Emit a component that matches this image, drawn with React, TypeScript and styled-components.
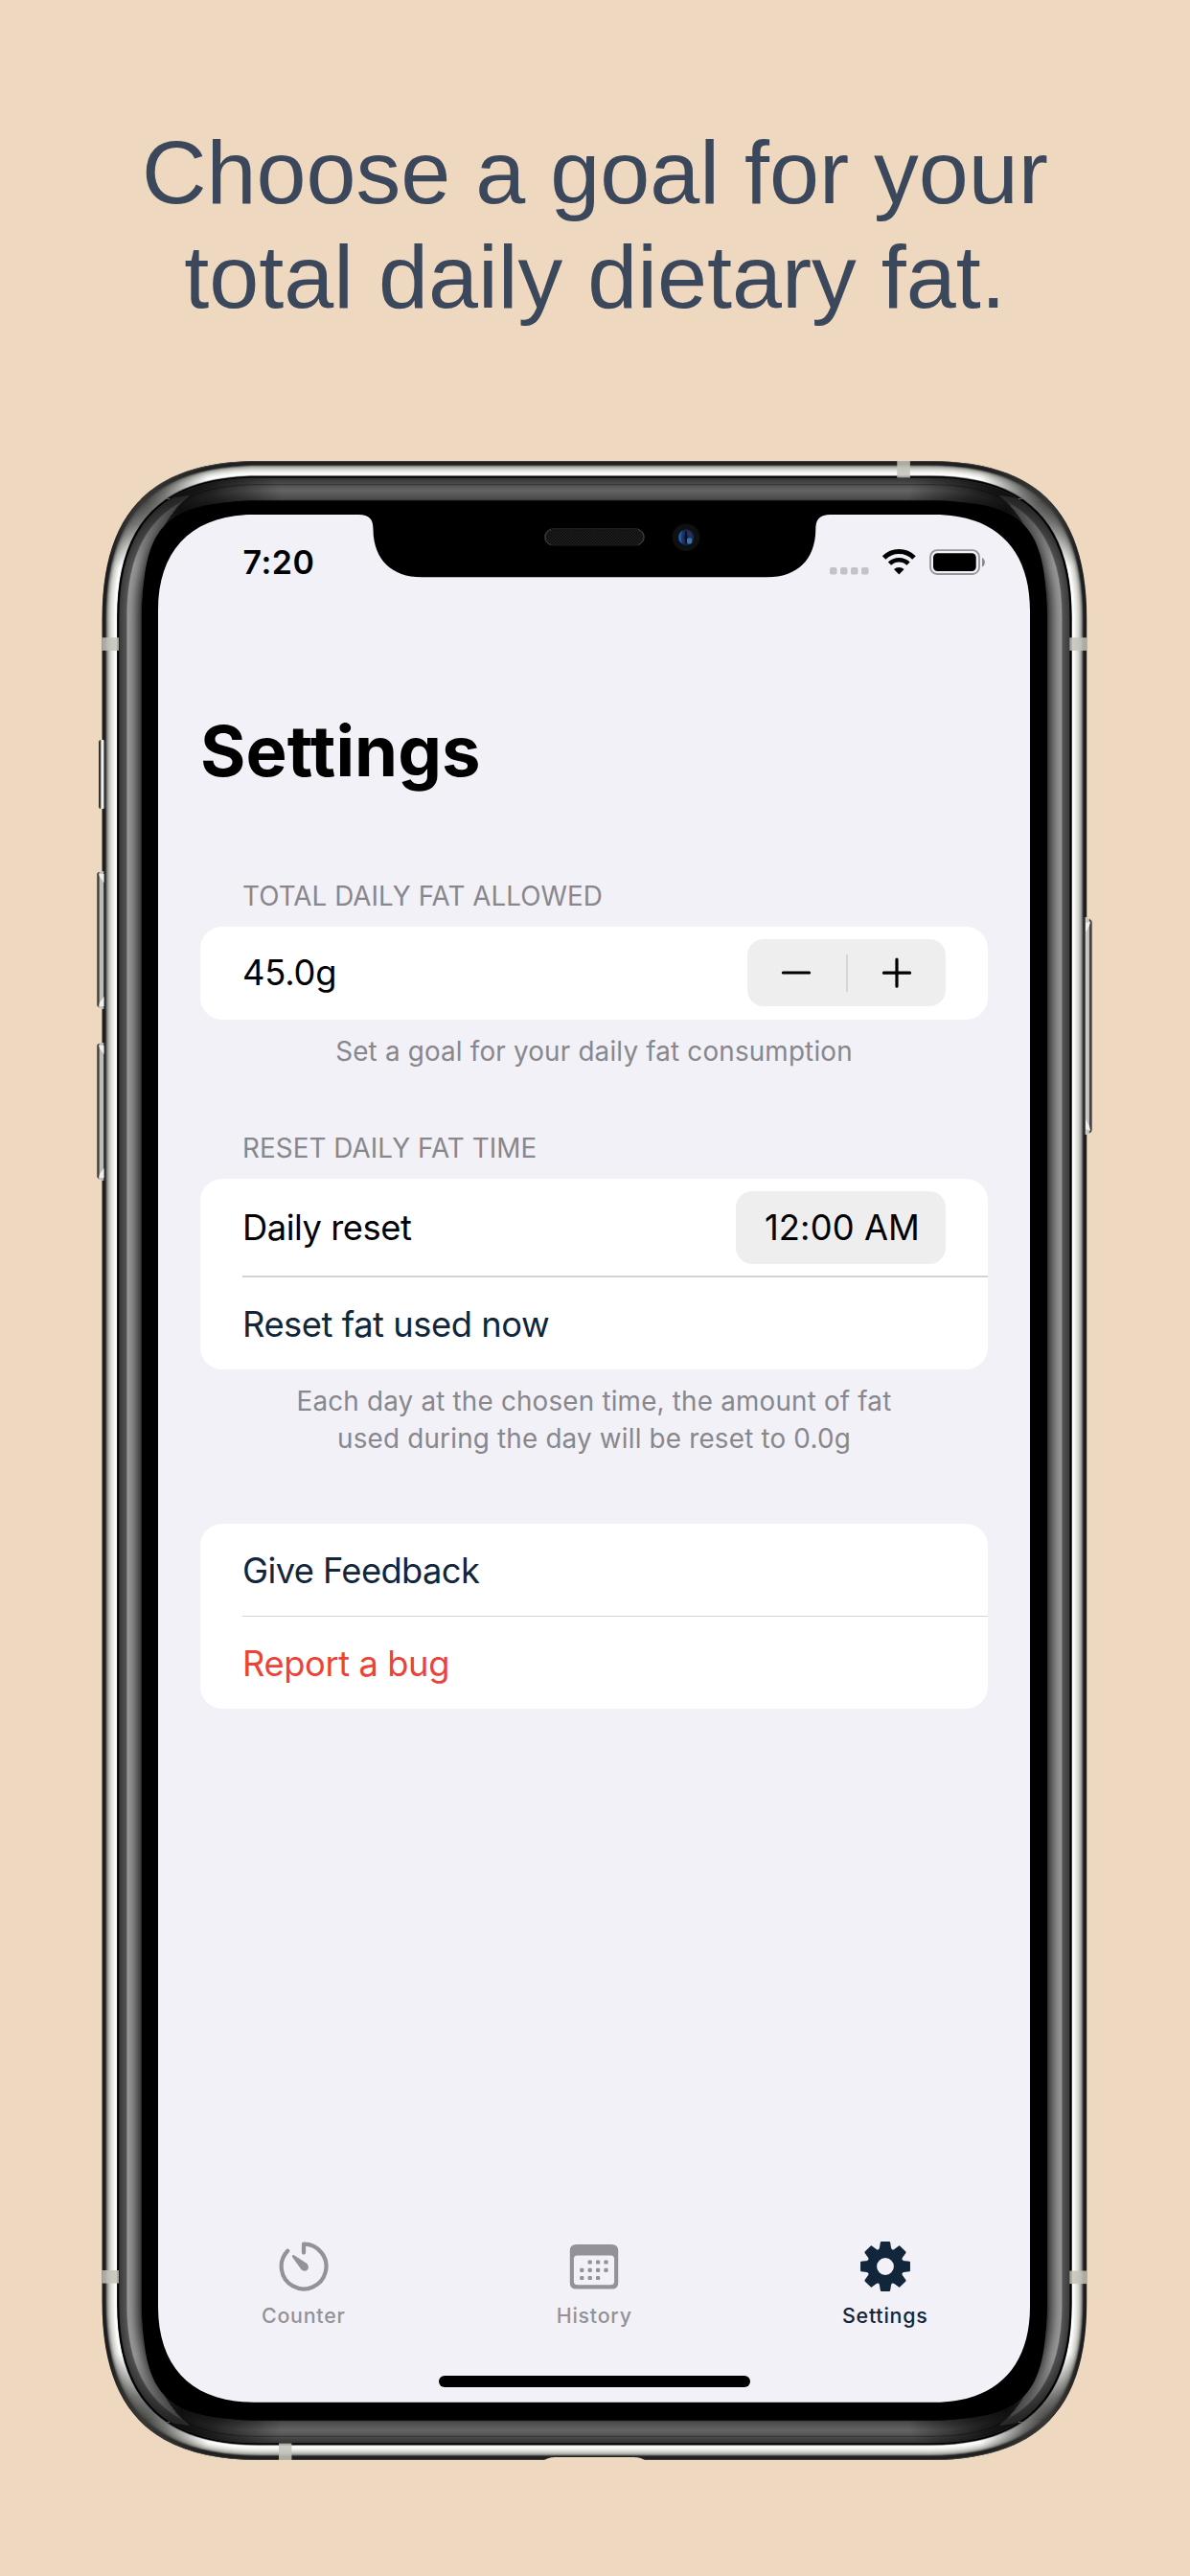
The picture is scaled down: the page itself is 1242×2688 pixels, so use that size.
import React from "react";
import styled, { createGlobalStyle } from "styled-components";

const INTER = `Inter, "Noto Sans", sans-serif`;
const NAVY = "#11263b";
const GRAY = "#88878c";
const TAB_GRAY = "#939298";

const GlobalStyle = createGlobalStyle`
  * { box-sizing: border-box; }
  body { margin: 0; background: #efd8c0; }
`;

const Page = styled.main`
  width: 1242px;
  height: 2688px;
  overflow: hidden;
  display: flex;
  flex-direction: column;
  align-items: center;
  background: #efd8c0;
  font-family: ${INTER};
`;

const Headline = styled.h1`
  margin: 0;
  padding: 125px 0 0;
  height: 478px;
  font: 400 93.5px/109px "Liberation Sans", Arial, sans-serif;
  color: #3b475b;
  text-align: center;
  white-space: pre-line;
`;

const Phone = styled.section`
  display: grid;
  width: 1042px;
  height: 2092px;
  > * { grid-area: 1 / 1; }
`;

const Screen = styled.div`
  width: 910px;
  height: 1970px;
  margin: 59px 0 0 65px;
  display: flex;
  flex-direction: column;
  z-index: 1;
`;

const StatusBar = styled.header`
  height: 100px;
  padding: 0 46px 0 88.5px;
  display: flex;
  align-items: center;
  justify-content: space-between;
`;

const Clock = styled.time`
  font-size: 34px;
  line-height: 44px;
  font-weight: 600;
  letter-spacing: 0.5px;
`;

const Title = styled.h2`
  margin: 102px 0 0 44px;
  font-size: 72.4px;
  line-height: 90px;
  font-weight: 700;
  letter-spacing: 0.1px;
  color: #000;
`;

const Group = styled.section<{ $gap: number }>`
  margin: ${(p) => p.$gap}px 44px 0;
  display: flex;
  flex-direction: column;
`;

const GroupTitle = styled.h3<{ $track: number }>`
  margin: 0 0 13px;
  padding-left: 44px;
  font-size: 27.8px;
  line-height: 38px;
  font-weight: 400;
  letter-spacing: ${(p) => p.$track}px;
  color: ${GRAY};
`;

const Card = styled.div`
  display: flex;
  flex-direction: column;
  background: #fff;
  border-radius: 23px;
`;

const Row = styled.div<{ $h: number; $color?: string; $track?: number; $drop?: number }>`
  height: ${(p) => p.$h}px;
  padding: ${(p) => p.$drop ?? 0}px 44px 0;
  display: flex;
  align-items: center;
  justify-content: space-between;
  font-size: 36.3px;
  letter-spacing: ${(p) => p.$track ?? 0}px;
  color: ${(p) => p.$color ?? "#000"};
`;

const Separator = styled.div`
  height: 1.6px;
  margin-left: 44px;
  background: #d3d3d6;
`;

const Note = styled.p<{ $track: number }>`
  margin: 14px 0 0;
  font-size: 27.8px;
  line-height: 39.5px;
  letter-spacing: ${(p) => p.$track}px;
  color: ${GRAY};
  text-align: center;
  white-space: pre-line;
`;

const Stepper = styled.div`
  width: 207px;
  height: 70px;
  display: flex;
  align-items: center;
  border-radius: 17px;
  background: #eeeeef;
`;

const StepButton = styled.button`
  flex: 1;
  height: 100%;
  padding: 0;
  border: 0;
  background: none;
  display: flex;
  align-items: center;
  justify-content: center;
`;

const StepDivider = styled.span`
  width: 2px;
  height: 39px;
  background: #d6d6d8;
`;

const TimePill = styled.span`
  width: 219px;
  height: 76px;
  padding: 1px 0 0 3px;
  display: flex;
  align-items: center;
  justify-content: center;
  border-radius: 17px;
  background: #eeeeef;
  letter-spacing: 0.1px;
`;

const TabBar = styled.nav`
  margin-top: auto;
  height: 144px;
  display: grid;
  grid-template-columns: repeat(3, 303.5px);
`;

const Tab = styled.div<{ $active?: boolean }>`
  display: flex;
  flex-direction: column;
  align-items: center;
  font-size: 21.4px;
  line-height: 28px;
  font-weight: 500;
  letter-spacing: 0.75px;
  color: ${(p) => (p.$active ? NAVY : TAB_GRAY)};
  svg { display: block; margin-bottom: 7px; }
`;

const HomeIndicator = styled.div`
  width: 325px;
  height: 12px;
  margin: 0 auto 16px;
  border-radius: 6px;
  background: #000;
`;

/* ---- device artwork ---- */

const L = 106.5;
const R = 1134.3;
const T = 481;
const B = 2567;
const CX = (L + R) / 2;

// Rounded rectangle with continuous corners, inset by d from the outer edge.
function shell(d: number, extent?: number, handle?: number): string {
  const k = d / 58;
  const e = extent ?? 165 - 65 * k;
  const a = handle ?? 52 - 16 * k;
  const l = L + d;
  const r = R - d;
  const t = T + d;
  const b = B - d;
  return (
    `M${l} ${t + e}C${l} ${t + a} ${l + a} ${t} ${l + e} ${t}` +
    `H${r - e}C${r - a} ${t} ${r} ${t + a} ${r} ${t + e}` +
    `V${b - e}C${r} ${b - a} ${r - a} ${b} ${r - e} ${b}` +
    `H${l + e}C${l + a} ${b} ${l} ${b - a} ${l} ${b - e}Z`
  );
}

type Stop = [number, number];
const SIDE: Stop[] = [
  [0, 60], [1, 30], [3.6, 34], [4.6, 100], [5.5, 140], [7, 184], [9, 214], [11.5, 236], [14, 254],
  [15.4, 254], [15.8, 30], [16.2, 0], [17.6, 0], [18.2, 60], [24, 80], [25.4, 84], [25.8, 112], [26.6, 152],
  [31, 136], [36, 100], [40, 66], [41.3, 40], [41.8, 0], [43, 0],
];
const CAP: Stop[] = [
  [0, 95], [1, 34], [4, 34], [4.8, 90], [6, 160], [8, 200], [10.5, 232], [13, 250],
  [14.8, 254], [15.5, 150], [16, 10], [17.4, 0], [18, 54], [23.8, 74], [24.4, 54], [25, 54], [25.6, 84],
  [31, 100], [36, 86], [40, 74], [41, 60], [41.6, 0], [43, 0],
];
function tone(stops: Stop[], d: number): string {
  let i = 1;
  while (i < stops.length - 1 && stops[i][0] < d) i++;
  const [x0, v0] = stops[i - 1];
  const [x1, v1] = stops[i];
  const v = Math.round(v0 + ((v1 - v0) * Math.min(1, Math.max(0, (d - x0) / (x1 - x0)))));
  return `rgb(${v},${v},${v > 100 && v < 245 && d < 15 ? v - 4 : v})`;
}
const RINGS = Array.from({ length: 106 }, (_, i) => i * 0.4);

function Rings({ stops, clip }: { stops: Stop[]; clip?: string }) {
  return (
    <g clipPath={clip}>
      {RINGS.map((d) => (
        <path key={d} d={shell(d)} fill={tone(stops, d + 0.2)} />
      ))}
    </g>
  );
}

const SCREEN =
  `M165 637C165 573 201 537 265 537H374C386 537 389.5 542 389.5 553C390 584 409 602.3 440 602.3` +
  `H800.8C832 602.3 850.8 584 851.3 553C851.3 542 855 537 867 537H975C1039 537 1075 573 1075 637` +
  `V2406.7C1075 2470.7 1039 2506.7 975 2506.7H265C201 2506.7 165 2470.7 165 2406.7Z`;

function CornerShade() {
  return (
    <>
      <g clipPath="url(#rim)">
        <circle cx="147" cy="522" r="74" fill="url(#rimShade)" />
      </g>
      <g clipPath="url(#lip)">
        <g clipPath="url(#caps)">
          <ellipse cx="190" cy="532" rx="106" ry="76" fill="url(#lipShade)" />
        </g>
        <g clipPath="url(#sides)">
          <circle cx="188" cy="526" r="80" fill="url(#sideShade)" />
        </g>
      </g>
    </>
  );
}

function DeviceArt() {
  const capTop = `M${L} ${T}L150 524Q178 520 198 517Q182 530 172 548L300 620H941L1068.8 548Q1058.8 530 1042.8 517Q1062.8 520 1090.8 524L${R} ${T}Z`;
  const capBottom = `M${L} ${B}L150 2524Q178 2528 198 2531Q182 2518 172 2500L300 2428H941L1068.8 2500Q1058.8 2518 1042.8 2531Q1062.8 2528 1090.8 2524L${R} ${B}Z`;
  const sides = `M${L} ${T}L150 524Q178 520 198 517Q182 530 172 548V1524H${L - 10}V${T}Z`;
  return (
    <svg width="1042" height="2092" viewBox="100 478 1042 2092" aria-hidden="true">
      <defs>
        <clipPath id="caps"><path d={capTop + capBottom} /></clipPath>
        <clipPath id="sides"><path d={sides} /></clipPath>
        <clipPath id="rim"><path d={shell(0.8) + shell(16)} clipRule="evenodd" /></clipPath>
        <clipPath id="lip"><path d={shell(18) + shell(42)} clipRule="evenodd" /></clipPath>
        <radialGradient id="rimShade">
          <stop offset="0" stopColor="#3a3a38" stopOpacity=".88" />
          <stop offset=".35" stopColor="#3a3a38" stopOpacity=".66" />
          <stop offset="1" stopColor="#3a3a38" stopOpacity="0" />
        </radialGradient>
        <radialGradient id="lipShade">
          <stop offset="0" stopColor="#000" stopOpacity=".85" />
          <stop offset=".35" stopColor="#000" stopOpacity=".65" />
          <stop offset="1" stopColor="#000" stopOpacity="0" />
        </radialGradient>
        <radialGradient id="sideShade">
          <stop offset="0" stopColor="#111" stopOpacity=".65" />
          <stop offset="1" stopColor="#111" stopOpacity="0" />
        </radialGradient>
        <linearGradient id="mute" x1="0" x2="1">
          <stop offset="0" stopColor="#222" /><stop offset=".22" stopColor="#444" />
          <stop offset=".45" stopColor="#f4f4f2" /><stop offset=".65" stopColor="#eee" />
          <stop offset=".85" stopColor="#444" /><stop offset="1" stopColor="#222" />
        </linearGradient>
        <linearGradient id="volume" x1="0" x2="1">
          <stop offset="0" stopColor="#332f2c" /><stop offset=".2" stopColor="#444" />
          <stop offset=".36" stopColor="#babdb8" /><stop offset=".75" stopColor="#b8bbb6" />
          <stop offset=".82" stopColor="#444" /><stop offset="1" stopColor="#222" />
        </linearGradient>
        <linearGradient id="power" x1="0" x2="1">
          <stop offset="0" stopColor="#222" /><stop offset=".16" stopColor="#444" />
          <stop offset=".26" stopColor="#cdcdca" /><stop offset=".62" stopColor="#c2c2be" />
          <stop offset=".74" stopColor="#444" /><stop offset="1" stopColor="#4a403a" />
        </linearGradient>
        <radialGradient id="lens">
          <stop offset="0" stopColor="#0c1430" /><stop offset=".5" stopColor="#1c3768" />
          <stop offset="1" stopColor="#152a50" />
        </radialGradient>
        <pattern id="mesh" width="3" height="3" patternUnits="userSpaceOnUse">
          <rect width="3" height="3" fill="#0c0c0c" />
          <rect width="1.4" height="1.4" fill="#222" />
          <rect x="1.5" y="1.5" width="1.4" height="1.4" fill="#222" />
        </pattern>
      </defs>

      <Rings stops={SIDE} />
      <Rings stops={CAP} clip="url(#caps)" />
      <CornerShade />
      <g transform={`translate(${2 * CX} 0) scale(-1 1)`}><CornerShade /></g>
      <g transform={`translate(0 ${T + B}) scale(1 -1)`}><CornerShade /></g>
      <g transform={`translate(${2 * CX} ${T + B}) scale(-1 -1)`}><CornerShade /></g>
      <path d={shell(42, 122, 24)} fill="#000" />

      <rect x="103" y="772" width="7" height="72" rx="2.5" fill="url(#mute)" />
      {[909, 1088].map((y) => (
        <g key={y}>
          <path d={`M101.3 ${y + 3}Q101.3 ${y + 1.5} 103 ${y + 1}L107 ${y}H110V${y + 144}H107L103 ${y + 142}Q101.3 ${y + 141} 101.3 ${y + 140}Z`} fill="url(#volume)" />
          <path d={`M103 ${y + 2.5}L108.5 ${y + 3}V${y + 12}L104 ${y + 6}ZM103 ${y + 141.5}L108.5 ${y + 141}V${y + 131}L104 ${y + 137}Z`} fill="#efefed" />
        </g>
      ))}
      <path d="M1131 957H1134L1138 959.5Q1139.7 960.5 1139.7 962V1179Q1139.7 1181 1138 1182L1134 1184H1131Z" fill="url(#power)" />
      <path d="M1138 961.5L1133 963V973L1137 966ZM1138 1180L1133 1178V1168L1137 1175Z" fill="#f0f0ee" />

      <g fill="#c2c3b8" fillOpacity=".86">
        <rect x="106.5" y="665.3" width="17.5" height="13.6" />
        <rect x="1116.3" y="665.3" width="18" height="13.6" />
        <rect x="106.5" y="2369" width="17.5" height="13.6" />
        <rect x="1116.3" y="2369.5" width="18" height="13.6" />
        <rect x="936.3" y="481" width="13.6" height="17.5" />
        <rect x="291" y="2549.5" width="13.4" height="17.5" />
      </g>
      <path d="M567 2567.6C573 2564.5 575 2564 581 2564H660C666 2564 668 2564.5 674 2567.6Z" fill="#efd8c0" />

      <path d={SCREEN} fill="#f2f1f8" />

      <rect x="568.6" y="551.6" width="103.6" height="17.4" rx="8.7" fill="url(#mesh)" stroke="#1d1d1d" strokeWidth="1.2" />
      <path d="M575 552.6C571 554.5 569 557 569 560.5S571 566.5 575 568.5M666 552.6C670 554.5 672 557 672 560.5S670 566.5 666 568.5" fill="none" stroke="#484848" strokeWidth="1" />
      <circle cx="716" cy="560.7" r="14.3" fill="#0e1011" />
      <circle cx="716" cy="560.7" r="8.2" fill="url(#lens)" />
      <path d="M712 554A7.5 7.5 0 0 0 712 567Q710 560 712 554Z" fill="#2c5a98" />
      <ellipse cx="719.6" cy="564.4" rx="2.8" ry="3.2" fill="#3a72ae" />
      <ellipse cx="718.8" cy="556.2" rx="2.8" ry="2" fill="#33285f" />
      <rect x="714.8" y="554" width="2.2" height="13.5" rx="1" fill="#0a1024" />
    </svg>
  );
}

function StatusIcons() {
  return (
    <svg width="164" height="30" viewBox="865 572 164 30" aria-hidden="true">
      {[866, 877, 888, 899].map((x) => (
        <rect key={x} x={x} y="592" width="7.5" height="7.5" rx="1.8" fill="#c3c2c8" />
      ))}
      <g fill="none" stroke="#000">
        <path d="M922.6 582A22 22 0 0 1 954 582" strokeWidth="5" />
        <path d="M928.5 588.2A14 14 0 0 1 948.1 588.2" strokeWidth="4.6" />
      </g>
      <path d="M933 594A7.8 7.8 0 0 1 943.6 594L938.3 599.4Z" />
      <rect x="971" y="574.2" width="51" height="24.8" rx="7" fill="none" stroke="#97969c" strokeWidth="1.8" />
      <rect x="974" y="577.2" width="44.7" height="18.8" rx="4.4" />
      <path d="M1025 582C1028.8 583.4 1028.8 590.4 1025 591.4Z" fill="#88878d" />
    </svg>
  );
}

function TimerIcon() {
  return (
    <svg width="54" height="60" viewBox="-27 -30 54 60" aria-hidden="true">
      <path d="M0 -14.4V-23.4A23.4 23.4 0 1 1 -16.8 -16.2" fill="none" stroke={TAB_GRAY} strokeWidth="4.2" strokeLinecap="round" strokeLinejoin="round" />
      <path d="M-11.7 -11.5C-11 -12.2 -10.2 -11.9 -9.6 -11.5L3 -3.2C6.6 .2 4.6 4.8 1.2 4.8C-1 4.8 -2.4 3.6 -3.6 1.8L-11.7 -9.6C-12.2 -10.4 -12.3 -11 -11.7 -11.5Z" fill={TAB_GRAY} />
    </svg>
  );
}

function CalendarIcon() {
  const dots = [
    [615.2, 2362], [623.6, 2362], [632, 2362],
    [606.8, 2370.3], [615.2, 2370.3], [623.6, 2370.3], [632, 2370.3],
    [606.8, 2378.5], [615.2, 2378.5], [623.6, 2378.5],
  ];
  return (
    <svg width="54" height="60" viewBox="592.5 2336.5 54 60" aria-hidden="true" fill={TAB_GRAY}>
      <path
        fillRule="evenodd"
        d="M601 2343.4H638Q644.7 2343.4 644.7 2350V2383.4Q644.7 2390 638 2390H601Q594.3 2390 594.3 2383.4V2350Q594.3 2343.4 601 2343.4ZM602 2355Q598.4 2355 598.4 2358.6V2382Q598.4 2385.8 602 2385.8H637Q640.6 2385.8 640.6 2382V2358.6Q640.6 2355 637 2355Z"
      />
      {dots.map(([x, y]) => (
        <rect key={`${x}-${y}`} x={x - 2.1} y={y - 2.1} width="4.2" height="4.2" rx="1.2" />
      ))}
    </svg>
  );
}

const polar = (angle: number, r: number) =>
  `${(Math.sin(angle) * r).toFixed(2)} ${(-Math.cos(angle) * r).toFixed(2)}`;

function GearIcon() {
  let outline = "";
  for (let i = 0; i < 8; i++) {
    const a = (i * Math.PI) / 4;
    outline += `${i ? "L" : "M"}${polar(a - 0.26, 19.8)}L${polar(a - 0.165, 25.3)}L${polar(a + 0.165, 25.3)}`;
    outline += `L${polar(a + 0.26, 19.8)}Q${polar(a + Math.PI / 8, 16.4)} ${polar(a + Math.PI / 4 - 0.26, 19.8)}`;
  }
  return (
    <svg width="54" height="60" viewBox="-27 -30 54 60" aria-hidden="true">
      <path
        d={`${outline}ZM9.9 0A9.9 9.9 0 1 0 -9.9 0A9.9 9.9 0 1 0 9.9 0Z`}
        fill={NAVY} fillRule="evenodd" stroke={NAVY} strokeWidth="2" strokeLinejoin="round"
      />
    </svg>
  );
}

const StepGlyph = ({ plus }: { plus?: boolean }) => (
  <svg width="34" height="34" viewBox="-17 -17 34 34" aria-hidden="true">
    <path d={plus ? "M-13.6 0.2H13.6M0 -13.8V14.2" : "M-13.6 0H13.6"} stroke="#000" strokeWidth="3.2" strokeLinecap="round" />
  </svg>
);

export default function App() {
  return (
    <Page>
      <GlobalStyle />
      <Headline>{"Choose a goal for your\ntotal daily dietary fat."}</Headline>
      <Phone>
        <DeviceArt />
        <Screen>
          <StatusBar>
            <Clock>7:20</Clock>
            <StatusIcons />
          </StatusBar>
          <Title>Settings</Title>

          <Group $gap={86.7}>
            <GroupTitle $track={0.05}>TOTAL DAILY FAT ALLOWED</GroupTitle>
            <Card>
              <Row $h={97} $track={-0.2}>
                45.0g
                <Stepper>
                  <StepButton><StepGlyph /></StepButton>
                  <StepDivider />
                  <StepButton><StepGlyph plus /></StepButton>
                </Stepper>
              </Row>
            </Card>
            <Note $track={0.19}>Set a goal for your daily fat consumption</Note>
          </Group>

          <Group $gap={61.8}>
            <GroupTitle $track={0.07}>RESET DAILY FAT TIME</GroupTitle>
            <Card>
              <Row $h={101} $track={-0.45} $drop={1}>
                Daily reset
                <TimePill>12:00 AM</TimePill>
              </Row>
              <Separator />
              <Row $h={96.4} $color={NAVY} $track={-0.44} $drop={1.5}>Reset fat used now</Row>
            </Card>
            <Note $track={0.2}>{"Each day at the chosen time, the amount of fat\nused during the day will be reset to 0.0g"}</Note>
          </Group>

          <Group $gap={67.7}>
            <Card>
              <Row $h={96} $color={NAVY} $track={-0.6} $drop={2}>Give Feedback</Row>
              <Separator />
              <Row $h={96} $color="#ec4237" $track={-0.4} $drop={1.5}>Report a bug</Row>
            </Card>
          </Group>

          <TabBar>
            <Tab><TimerIcon />Counter</Tab>
            <Tab><CalendarIcon />History</Tab>
            <Tab $active><GearIcon />Settings</Tab>
          </TabBar>
          <HomeIndicator />
        </Screen>
      </Phone>
    </Page>
  );
}
